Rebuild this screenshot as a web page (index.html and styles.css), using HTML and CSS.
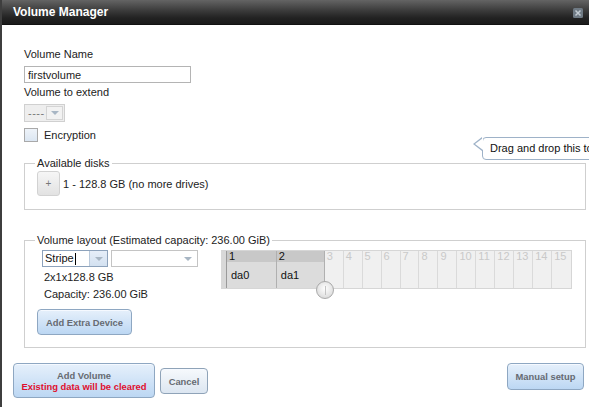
FILE: index.html
```html
<!DOCTYPE html>
<html>
<head>
<meta charset="utf-8">
<link rel="stylesheet" href="styles.css">
</head>
<body>
<div class="dialog">
  <div class="titlebar">
    <span class="title">Volume Manager</span>
    <svg class="close" width="10" height="10" viewBox="0 0 10 10">
      <rect x="0" y="0" width="10" height="10" rx="1.5" fill="#6f7a84"/>
      <path d="M2.5 2.5 L7.5 7.5 M7.5 2.5 L2.5 7.5" stroke="#c3cbd2" stroke-width="1.5"/>
    </svg>
  </div>
  <div class="body">
    <div class="field-label">Volume Name</div>
    <input class="text-input" type="text" value="firstvolume">
    <div class="field-label gap-top">Volume to extend</div>
    <div class="mini-select"><span class="ms-val">-----</span><span class="ms-arrow"><span class="tri"></span></span></div>
    <div class="check-row"><span class="checkbox"></span><span>Encryption</span></div>

    <fieldset class="group disks">
      <legend>Available disks</legend>
      <div class="disk-row">
        <span class="plus-btn">+</span>
        <span>1 - 128.8 GB (no more drives)</span>
      </div>
    </fieldset>

    <fieldset class="group layout">
      <legend>Volume layout (Estimated capacity: 236.00 GiB)</legend>
      <div class="layout-row">
        <div class="layout-left">
          <div class="select-row">
            <div class="combo stripe"><span class="combo-val">Stripe<span class="caret"></span></span><span class="combo-arrow"><span class="tri"></span></span></div>
            <div class="combo empty"><span class="combo-val"></span><span class="combo-arrow"><span class="tri"></span></span></div>
          </div>
          <div class="info-line">2x1x128.8 GB</div>
          <div class="info-line">Capacity: 236.00 GiB</div>
          <button class="btn extra">Add Extra Device</button>
        </div>
        <div class="grid-wrap">
          <div class="disk-grid">
            <div class="g-handle"></div>
            <div class="g-col used wide"><div class="g-head">1</div><div class="g-cell">da0</div></div>
            <div class="g-col used"><div class="g-head">2</div><div class="g-cell">da1</div></div>
            <div class="g-col free"><div class="g-head">3</div></div>
            <div class="g-col free"><div class="g-head">4</div></div>
            <div class="g-col free"><div class="g-head">5</div></div>
            <div class="g-col free"><div class="g-head">6</div></div>
            <div class="g-col free"><div class="g-head">7</div></div>
            <div class="g-col free"><div class="g-head">8</div></div>
            <div class="g-col free"><div class="g-head">9</div></div>
            <div class="g-col free"><div class="g-head">10</div></div>
            <div class="g-col free"><div class="g-head">11</div></div>
            <div class="g-col free"><div class="g-head">12</div></div>
            <div class="g-col free"><div class="g-head">13</div></div>
            <div class="g-col free"><div class="g-head">14</div></div>
            <div class="g-col free last"><div class="g-head">15</div></div>
          </div>
          <div class="knob"><span class="knob-line"></span></div>
        </div>
      </div>
    </fieldset>

    <div class="actions">
      <div class="actions-left">
        <button class="btn add-volume"><span class="av-title">Add Volume</span><span class="av-warn">Existing data will be cleared</span></button>
        <button class="btn cancel">Cancel</button>
      </div>
      <button class="btn manual">Manual setup</button>
    </div>
  </div>

  <div class="tooltip">Drag and drop this to</div>
</div>
</body>
</html>
```

FILE: styles.css
```css
* { box-sizing: border-box; }
html, body { margin: 0; padding: 0; }
body {
  width: 589px;
  height: 407px;
  overflow: hidden;
  background: #fff;
  font-family: "Liberation Sans", Arial, sans-serif;
  font-size: 11px;
  color: #222;
}
.dialog {
  position: relative;
  height: 407px;
  border-left: 2px solid #3e3e3e;
  background: #fff;
}
.titlebar {
  height: 25px;
  display: flex;
  align-items: center;
  justify-content: space-between;
  padding: 0 6px 0 11px;
  background: linear-gradient(#646464, #3a3a3a 45%, #222 75%, #1b1b1b);
  border-bottom: 1px solid #121212;
}
.title {
  color: #fff;
  font-weight: bold;
  font-size: 12px;
}
.close { display: block; margin-top: 1px; }
.body {
  padding: 23px 3px 0 22px;
}
.field-label {
  height: 13px;
  line-height: 13px;
}
.gap-top { margin-top: 3px; }
.text-input {
  display: block;
  width: 167px;
  height: 17px;
  margin: 5px 0 0 0;
  padding: 0 3px;
  border: 1px solid #b4b4b4;
  font: 11px "Liberation Sans", Arial, sans-serif;
  color: #222;
  outline: none;
}
.mini-select {
  display: flex;
  width: 41px;
  height: 18px;
  margin-top: 5px;
  border: 1px solid #d0d0d0;
  background: #eee;
  padding: 1px;
}
.ms-val {
  flex: 1;
  color: #777;
  line-height: 14px;
  padding-left: 2px;
  letter-spacing: 0.5px;
}
.ms-arrow {
  width: 17px;
  border: 1px solid #d4d4d4;
  background: #f2f2f2;
  display: flex;
  align-items: center;
  justify-content: center;
}
.tri {
  width: 0;
  height: 0;
  border-left: 4px solid transparent;
  border-right: 4px solid transparent;
  border-top: 4px solid #a8b6c4;
}
.check-row {
  display: flex;
  align-items: center;
  gap: 6px;
  margin-top: 6px;
  height: 14px;
}
.checkbox {
  width: 14px;
  height: 14px;
  border: 1px solid #a9a9a9;
  background: linear-gradient(#eef3f9, #dbe6f2);
}

.group {
  margin: 15px 0 0 0;
  border: 1px solid #cfcfcf;
  padding: 1px 12px 13px 12px;
  min-width: 0;
}
.group legend {
  padding: 0 2px;
  margin-left: -2px;
  line-height: 13px;
  color: #222;
}
.disk-row {
  display: flex;
  align-items: center;
  gap: 3px;
}
.plus-btn {
  width: 23px;
  height: 25px;
  border: 1px solid #d2d2d2;
  border-radius: 3px;
  background: linear-gradient(#f6f6f6, #e2e2e2);
  color: #777;
  font-size: 10px;
  display: flex;
  align-items: center;
  justify-content: center;
}

.layout {
  margin-top: 24px;
  padding: 3px 12px 12px 12px;
}
.layout-row {
  display: flex;
  align-items: flex-start;
}
.layout-left {
  width: 184px;
}
.select-row {
  display: flex;
  gap: 3px;
  margin-left: 5px;
}
.combo {
  display: flex;
  height: 17px;
  border: 1px solid #a7b6c7;
  background: #fff;
}
.combo.stripe { width: 66px; border-color: #8da2bb; }
.combo.empty { width: 87px; border-color: #c4c4c4; }
.combo-val {
  flex: 1;
  line-height: 15px;
  padding-left: 2px;
  color: #111;
  display: flex;
  align-items: center;
}
.caret {
  display: inline-block;
  width: 1px;
  height: 12px;
  background: #000;
  margin-left: 1px;
}
.combo-arrow {
  width: 18px;
  display: flex;
  align-items: center;
  justify-content: center;
}
.stripe .combo-arrow {
  background: linear-gradient(#e6eef8, #d3e1f1);
  border-left: 1px solid #b9c9db;
}
.info-line {
  margin: 4px 0 0 7px;
  height: 13px;
  line-height: 13px;
}
.btn {
  font: bold 9.4px "Liberation Sans", Arial, sans-serif;
  color: #666b72;
  border: 1px solid #8ea7c2;
  border-radius: 4px;
  background: linear-gradient(#e6f0fb, #bcd7f3);
  box-shadow: inset 0 1px 0 #f5f9ff;
  padding: 0;
  cursor: default;
}
.extra {
  display: block;
  width: 95px;
  height: 26px;
  margin-top: 8px;
}

.grid-wrap {
  position: relative;
  width: 351px;
  height: 39px;
  margin-left: 0;
}
.disk-grid {
  display: flex;
  height: 39px;
  border: 1px solid #d6d6d6;
  border-left: none;
  background: #f0f0f0;
}
.g-handle {
  width: 6px;
  background: #d8d8d8;
  border-right: 1px solid #9a9a9a;
}
.g-col {
  display: flex;
  flex-direction: column;
}
.g-col.used { width: 48px; background: #dcdcdc; border-right: 1px solid #b0b0b0; }
.g-col.used.wide { width: 50px; }
.g-col.used .g-head {
  background: #c8c8c8;
  color: #111;
}
.g-head {
  height: 11px;
  line-height: 11px;
  padding-left: 2px;
  font-size: 11px;
}
.g-cell {
  flex: 1;
  padding-left: 4px;
  display: flex;
  align-items: center;
  color: #111;
}
.g-col.free {
  width: 19px;
  border-right: 1px solid #dadada;
}
.g-col.free.last { border-right: none; }
.g-col.free .g-head { color: #c9c9c9; }

.knob {
  position: absolute;
  left: 95px;
  top: 31px;
  width: 18px;
  height: 18px;
  border-radius: 50%;
  border: 1px solid #a9a9a9;
  background: radial-gradient(circle at 50% 40%, #ffffff, #e4e4e4 60%, #cfcfcf);
  display: flex;
  justify-content: center;
  align-items: center;
}
.knob-line {
  width: 1px;
  height: 9px;
  background: #c4c4c4;
}

.actions {
  display: flex;
  justify-content: space-between;
  align-items: flex-start;
  margin: 15px 2px 0 -11px;
}
.actions-left {
  display: flex;
  align-items: flex-start;
  gap: 5px;
}
.add-volume {
  width: 142px;
  height: 35px;
  display: flex;
  flex-direction: column;
  align-items: center;
  justify-content: center;
  line-height: 11px;
}
.av-warn { color: #e0102e; }
.cancel {
  width: 48px;
  height: 26px;
  margin-top: 5px;
  border-color: #8fa3b8;
  background: linear-gradient(#f6f9fc, #dce6f1);
}
.manual {
  width: 77px;
  height: 27px;
}

.tooltip {
  position: absolute;
  left: 480px;
  top: 137px;
  width: 130px;
  height: 23px;
  border: 1px solid #9eb2c8;
  border-radius: 4px;
  background: #fff;
  padding-left: 7px;
  line-height: 21px;
  color: #111;
  white-space: nowrap;
}
.tooltip::before,
.tooltip::after {
  content: "";
  position: absolute;
  width: 0;
  height: 0;
  border-style: solid;
  border-color: transparent;
}
.tooltip::before {
  left: -10px;
  top: -1px;
  border-width: 7px 9px 7px 0;
  border-right-color: #9eb2c8;
}
.tooltip::after {
  left: -8px;
  top: 0px;
  border-width: 6px 8px 6px 0;
  border-right-color: #fff;
}
```
